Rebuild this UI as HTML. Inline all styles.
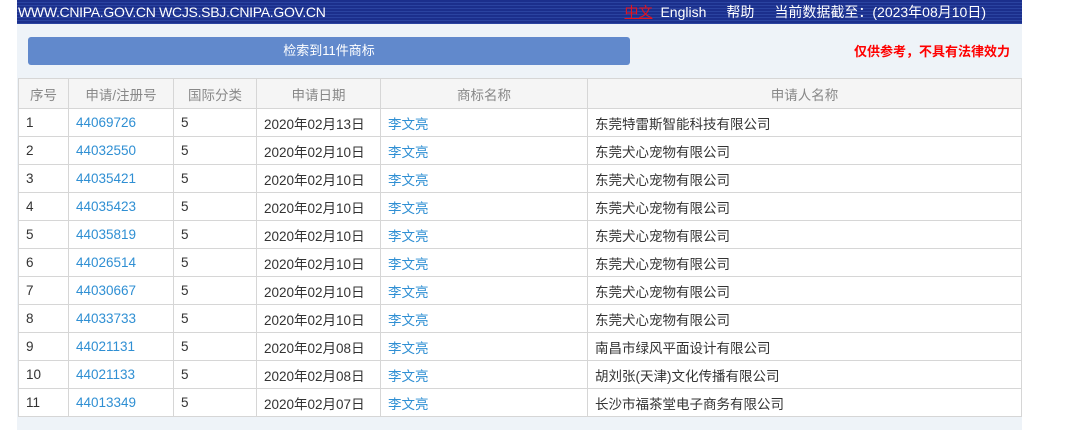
<!DOCTYPE html>
<html><head><meta charset="utf-8"><style>
*{margin:0;padding:0;box-sizing:border-box}
body{width:1080px;height:430px;background:#fff;font-family:"Liberation Sans","Noto Sans CJK SC",sans-serif;position:relative;overflow:hidden}
.wrap{position:absolute;left:17px;top:0;width:1005px;height:430px;background:#eef3f8}
.top{position:absolute;left:0;top:0;width:1005px;height:24px;background:repeating-linear-gradient(#1b2f8c 0 2px,#2a43a0 2px 3px);color:#fff;font-size:14px;line-height:24px}
.top .l{position:absolute;left:1px;top:0;letter-spacing:-0.3px}
.top .r{position:absolute;right:36px;top:0;font-size:14px}
.cn{color:#e8141c;text-decoration:underline}
.btn{position:absolute;left:11px;top:37px;width:602px;height:28px;background:#6189cc;border-radius:3px;color:#fff;font-size:13px;text-align:center;line-height:27px}
.warn{position:absolute;right:12px;top:41px;color:#f00;font-weight:bold;font-size:13px}
table{position:absolute;left:1px;top:78px;width:1004px;border-collapse:collapse;font-size:13.5px;color:#333}
td,th{border:1px solid #d6d6d6;background:#fff;height:28px;padding:0 7px;text-align:left;font-weight:normal}
th{background:#f5f5f5;color:#888;height:30px;text-align:center}
td.a{color:#2f8fd3}
</style></head><body>
<div class="wrap">
<div class="top"><div class="l">WWW.CNIPA.GOV.CN WCJS.SBJ.CNIPA.GOV.CN</div>
<div class="r"><span class="cn">中文</span><span style="margin-left:8px">English</span><span style="margin-left:20px">帮助</span><span style="margin-left:20px">当前数据截至：(2023年08月10日)</span></div></div>
<div class="btn">检索到11件商标</div>
<div class="warn">仅供参考，不具有法律效力</div>
<table>
<tr><th style="width:50px">序号</th><th style="width:105px">申请/注册号</th><th style="width:83px">国际分类</th><th style="width:124px">申请日期</th><th style="width:207px">商标名称</th><th>申请人名称</th></tr>
<tr><td>1</td><td class="a">44069726</td><td>5</td><td>2020年02月13日</td><td class="a">李文亮</td><td>东莞特雷斯智能科技有限公司</td></tr>
<tr><td>2</td><td class="a">44032550</td><td>5</td><td>2020年02月10日</td><td class="a">李文亮</td><td>东莞犬心宠物有限公司</td></tr>
<tr><td>3</td><td class="a">44035421</td><td>5</td><td>2020年02月10日</td><td class="a">李文亮</td><td>东莞犬心宠物有限公司</td></tr>
<tr><td>4</td><td class="a">44035423</td><td>5</td><td>2020年02月10日</td><td class="a">李文亮</td><td>东莞犬心宠物有限公司</td></tr>
<tr><td>5</td><td class="a">44035819</td><td>5</td><td>2020年02月10日</td><td class="a">李文亮</td><td>东莞犬心宠物有限公司</td></tr>
<tr><td>6</td><td class="a">44026514</td><td>5</td><td>2020年02月10日</td><td class="a">李文亮</td><td>东莞犬心宠物有限公司</td></tr>
<tr><td>7</td><td class="a">44030667</td><td>5</td><td>2020年02月10日</td><td class="a">李文亮</td><td>东莞犬心宠物有限公司</td></tr>
<tr><td>8</td><td class="a">44033733</td><td>5</td><td>2020年02月10日</td><td class="a">李文亮</td><td>东莞犬心宠物有限公司</td></tr>
<tr><td>9</td><td class="a">44021131</td><td>5</td><td>2020年02月08日</td><td class="a">李文亮</td><td>南昌市绿风平面设计有限公司</td></tr>
<tr><td>10</td><td class="a">44021133</td><td>5</td><td>2020年02月08日</td><td class="a">李文亮</td><td>胡刘张(天津)文化传播有限公司</td></tr>
<tr><td>11</td><td class="a">44013349</td><td>5</td><td>2020年02月07日</td><td class="a">李文亮</td><td>长沙市福茶堂电子商务有限公司</td></tr>
</table>
</div>
</body></html>
